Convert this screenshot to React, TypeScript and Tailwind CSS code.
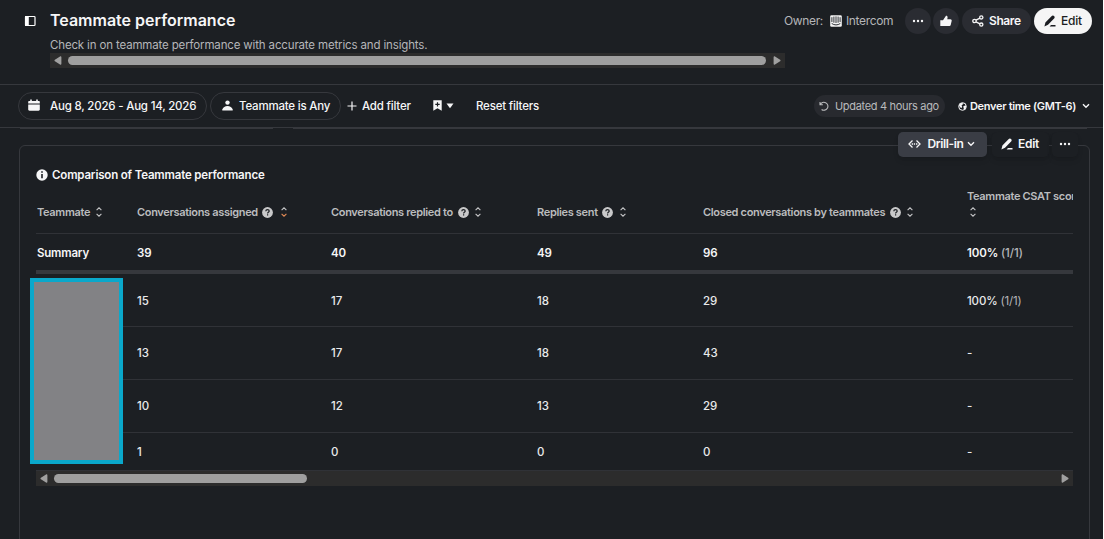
import React from "react";

type IconProps = { className?: string };

function SidebarIcon({ className }: IconProps) {
  return (
    <svg className={className} width="12" height="12" viewBox="0 0 12 12" fill="none">
      <rect x="1.500" y="1.500" width="9.500" height="9" rx="0.8" stroke="currentColor" strokeWidth="1.200" />
      <path d="M1 1h3.800v10H1z" fill="currentColor" />
    </svg>
  );
}

function CalendarIcon({ className }: IconProps) {
  return (
    <svg className={className} width="12" height="13" viewBox="0 0 12 13" fill="currentColor">
      <path d="M2.2.6h1.6V2h4.4V.6h1.6V2h1c.6 0 1 .4 1 1v1.4H.2V3c0-.6.4-1 1-1h1zM.2 5.600h11.600v5c0 .7-.5 1.200-1.200 1.200H1.400c-.7 0-1.200-.5-1.200-1.200z" />
    </svg>
  );
}

function PersonIcon({ className }: IconProps) {
  return (
    <svg className={className} width="11" height="11" viewBox="0 0 11 11" fill="currentColor">
      <circle cx="5.500" cy="2.600" r="2.200" />
      <path d="M.3 10.600V9.600C1 7.500 3.100 6.100 5.500 6.100s4.500 1.400 5.200 3.500v1z" />
    </svg>
  );
}

function PencilIcon({ className }: IconProps) {
  return (
    <svg className={className} width="12" height="12" viewBox="0 0 12 12" fill="currentColor">
      <path d="M.4 11.400l1-3.900L7.500 1.200c.8-.8 1.900-.8 2.600-.1.800.8.700 1.800 0 2.500L4 9.800z" />
      <path d="M5.600 11.400L7 9.900h4.500v1.500z" />
    </svg>
  );
}

function ShareIcon({ className }: IconProps) {
  return (
    <svg className={className} width="12" height="12" viewBox="0 0 12 12" fill="none" stroke="currentColor" strokeWidth="1.300">
      <circle cx="2.500" cy="6" r="1.700" />
      <circle cx="9.300" cy="2.400" r="1.600" />
      <circle cx="9.300" cy="9.600" r="1.600" />
      <path d="M4 5.200l3.900-2M4 6.800l3.900 2" />
    </svg>
  );
}

function ThumbIcon({ className }: IconProps) {
  return (
    <svg className={className} width="12" height="12" viewBox="0 0 12 12" fill="currentColor">
      <path d="M.3 5.200h2.700v5.900H.3zM3 5.200L6 .7c1-.1 1.700.6 1.600 1.600L7.300 4.200h3.100c.9 0 1.500.8 1.300 1.600l-1 4.100c-.2.7-.8 1.200-1.500 1.200H3z" />
    </svg>
  );
}

function DotsIcon({ className }: IconProps) {
  return (
    <svg className={className} width="12" height="4" viewBox="0 0 12 4" fill="currentColor">
      <circle cx="2" cy="2" r="1.200" />
      <circle cx="6" cy="2" r="1.200" />
      <circle cx="10" cy="2" r="1.200" />
    </svg>
  );
}

function IntercomIcon({ className }: IconProps) {
  return (
    <svg className={className} width="12" height="12" viewBox="0 0 12 12">
      <rect x="0.200" y="0.200" width="11.600" height="11.600" rx="1.300" fill="#f4f4f4" />
      <path d="M1.900 2.600v4M3.900 2v5.300M6 1.800v5.800M8.100 2v5.300M10.100 2.600v4M2 8.700c2.300 1.700 5.700 1.700 8 0" fill="none" stroke="#24272c" strokeWidth="0.950" strokeLinecap="round" />
    </svg>
  );
}

function BookmarkIcon({ className }: IconProps) {
  return (
    <svg className={className} width="9" height="11" viewBox="0 0 9 11">
      <path d="M.3.300h8.400v10.400L4.500 8.300.3 10.700z" fill="currentColor" />
      <path d="M4.500 2.200v4.400M2.300 4.400h4.400" stroke="#1c1f23" strokeWidth="1.200" />
    </svg>
  );
}

function UndoIcon({ className }: IconProps) {
  return (
    <svg className={className} width="10" height="10" viewBox="0 0 10 10" fill="none" stroke="currentColor" strokeWidth="1.100">
      <path d="M1 .9v2.900h2.900M1.200 3.700A4 4 0 1 1 2.600 8.500" />
    </svg>
  );
}

function GlobeIcon({ className }: IconProps) {
  return (
    <svg className={className} width="9" height="9" viewBox="0 0 9 9" fill="none">
      <circle cx="4.500" cy="4.500" r="3.800" stroke="currentColor" strokeWidth="1" />
      <path d="M1 3.500L3 1l2.300.3-.8 1.500-1 .8.7 1.200-.6 1.300L2 5.200zM5.300 4.300l2-.8.9.6-.6 2.500-1.700 1.300-.2-1.700z" fill="currentColor" />
    </svg>
  );
}

function ChevronDown({ className }: IconProps) {
  return (
    <svg className={className} width="8" height="6" viewBox="0 0 8 6" fill="none" stroke="currentColor" strokeWidth="1.400">
      <path d="M1 1.200l3 3 3-3" />
    </svg>
  );
}

function DrillIcon({ className }: IconProps) {
  return (
    <svg className={className} width="13" height="10" viewBox="0 0 13 10" fill="none" stroke="currentColor" strokeWidth="1.300">
      <path d="M4.500 1.500L1 5l3.500 3.500M8.500 1.500L12 5 8.500 8.500M3.700 5h1.400M8 5h1.400M5.900 5h1.200" />
    </svg>
  );
}

function InfoIcon({ className }: IconProps) {
  return (
    <svg className={className} width="12" height="12" viewBox="0 0 12 12">
      <circle cx="6" cy="6" r="5.700" fill="#f6f6f7" />
      <path d="M6 2.300v1.500M6 4.900v4.400" stroke="#1c1f23" strokeWidth="1.600" />
    </svg>
  );
}

function HelpIcon() {
  return (
    <svg className="ml-[4px]" width="11" height="11" viewBox="0 0 11 11">
      <circle cx="5.500" cy="5.500" r="5.400" fill="#c9c9ca" />
      <path d="M3.800 4.300c0-1.100.8-1.700 1.700-1.700 1 0 1.700.6 1.700 1.500 0 1.200-1.600 1.200-1.600 2.300M5.600 7.300v1.200" fill="none" stroke="#1c1f23" strokeWidth="1.200" />
    </svg>
  );
}

function SortIcon({ active, className }: { active?: boolean; className?: string }) {
  return (
    <svg className={className} width="6" height="10" viewBox="0 0 6 10" fill="none" strokeWidth="1.100">
      <path d="M.6 3.200L3 .8l2.400 2.400" stroke="#c4c4c6" />
      <path d="M.6 6.800L3 9.200l2.400-2.400" stroke={active ? "#e08a56" : "#c4c4c6"} />
    </svg>
  );
}

function Arrow({ flip }: { flip?: boolean }) {
  return (
    <svg className={flip ? "rotate-180" : ""} width="8" height="9" viewBox="0 0 8 9">
      <path d="M.9 3.800L6 .5c.8-.4 1.400-.1 1.400.7v6.600c0 .8-.6 1.100-1.400.7L.9 5.200a.8.8 0 0 1 0-1.400z" fill="#a0a0a0" />
    </svg>
  );
}

function Scrollbar({ thumb }: { thumb: string }) {
  return (
    <div className="flex h-[15px] items-center bg-[#2c2c2c] px-[4px]">
      <Arrow />
      <div className="flex-1 pl-[6px]">
        <div className={`h-[9px] rounded-full bg-[#9f9f9f] ${thumb}`} />
      </div>
      <Arrow flip />
    </div>
  );
}

const GRID = "grid grid-cols-[100px_194px_206px_166px_264px_200px] pl-px";

const COLUMNS = [
  { label: "Teammate", help: false, text: "w-[53px]", gap: "ml-[6px]" },
  { label: "Conversations assigned", help: true, active: true, text: "w-[121px]", gap: "ml-[8px]" },
  { label: "Conversations replied to", help: true, text: "w-[123px]", gap: "ml-[6px]" },
  { label: "Replies sent", help: true, text: "w-[61px]", gap: "ml-[7px]" },
  { label: "Closed conversations by teammates", help: true, text: "w-[183px]", gap: "ml-[6px]" },
];

const ROWS = [
  { cells: ["15", "17", "18", "29"], score: "100%", height: "h-[53px] pt-px" },
  { cells: ["13", "17", "18", "43"], height: "h-[53px] pb-px" },
  { cells: ["10", "12", "13", "29"], height: "h-[53px] pb-px" },
  { cells: ["1", "0", "0", "0"], height: "h-[38px] pt-px" },
];

function Header() {
  return (
    <header className="flex h-[85px] border-b border-[#36383d]">
      <SidebarIcon className="mt-[15px] ml-[24px] text-white" />
      <div className="ml-[14px] w-[735px] shrink-0">
        <h1 className="mt-[10px] text-[16px] leading-[20px] font-semibold">Teammate performance</h1>
        <p className="mt-[8px] text-[11.5px] leading-[14px] tracking-[-0.15px] text-[#b5b6b9]">
          Check in on teammate performance with accurate metrics and insights.
        </p>
        <div className="mt-px">
          <Scrollbar thumb="w-[698px]" />
        </div>
      </div>
      <div className="mt-[8px] ml-[-1px] flex h-[26px] flex-1 items-center justify-end pr-[11px] text-[12px]">
        <span className="w-[46px] shrink-0 tracking-[-0.35px] text-[#b5b6b9]">Owner:</span>
        <IntercomIcon />
        <span className="ml-[4px] w-[59px] shrink-0 tracking-[-0.35px] text-[#b5b6b9]">Intercom</span>
        <button className="flex size-[26px] shrink-0 items-center justify-center rounded-full bg-[#2a2c32]">
          <DotsIcon />
        </button>
        <button className="ml-[2px] flex size-[26px] shrink-0 items-center justify-center rounded-full bg-[#2a2c32]">
          <ThumbIcon />
        </button>
        <button className="ml-[3px] flex h-[26px] w-[69px] shrink-0 items-center rounded-full bg-[#2a2c32] pl-[10px] font-semibold">
          <ShareIcon />
          <span className="ml-[5px] tracking-[-0.4px]">Share</span>
        </button>
        <button className="ml-[3px] flex h-[26px] w-[58px] shrink-0 items-center rounded-full bg-[#f5f5f5] pl-[10px] font-medium text-[#1b1d21]">
          <PencilIcon />
          <span className="ml-[5px] tracking-[-0.2px]">Edit</span>
        </button>
      </div>
    </header>
  );
}

function FilterBar() {
  return (
    <div className="flex h-[43px] items-center border-b border-[#36383d] pl-[18px] text-[11.5px] leading-[16px] font-medium tracking-[-0.2px]">
      <button className="flex h-[28px] w-[189px] items-center rounded-full border border-[#36383d] pl-[9px]">
        <CalendarIcon className="mb-[2px]" />
        <span className="ml-[10px] whitespace-nowrap">Aug 8, 2026 - Aug 14, 2026</span>
      </button>
      <button className="ml-[3px] flex h-[28px] w-[131px] items-center rounded-full border border-[#36383d] pl-[11px]">
        <PersonIcon className="mb-[2px]" />
        <span className="ml-[6px] whitespace-nowrap">Teammate is Any</span>
      </button>
      <svg className="ml-[6px]" width="10" height="10" viewBox="0 0 10 10" stroke="currentColor" strokeWidth="1.200">
        <path d="M5 .5v9M.5 5h9" />
      </svg>
      <span className="ml-[5px] w-[71px] whitespace-nowrap">Add filter</span>
      <BookmarkIcon className="mb-px" />
      <svg className="ml-[4px]" width="8" height="6" viewBox="0 0 8 6" fill="currentColor">
        <path d="M.5.500h7L4 5.200z" />
      </svg>
      <span className="ml-[22px] whitespace-nowrap">Reset filters</span>
      <div className="ml-auto flex h-[22px] w-[131px] shrink-0 items-center rounded-full bg-[#282a2f] pl-[5px] text-[11px] font-normal text-[#b9babc]">
        <UndoIcon />
        <span className="ml-[6px] tracking-[-0.32px] whitespace-nowrap">Updated 4 hours ago</span>
      </div>
      <div className="ml-[13px] flex w-[145px] shrink-0 items-center">
        <GlobeIcon />
        <span className="ml-[3px] w-[112px] pb-px text-[11px] font-semibold tracking-[-0.32px] whitespace-nowrap">Denver time (GMT-6)</span>
        <ChevronDown />
      </div>
    </div>
  );
}

function CardActions() {
  return (
    <div className="absolute top-[-14px] right-[11px] flex h-[25px] text-[12px] leading-[17px] font-semibold">
      <button className="flex w-[89px] items-center rounded-[5px] bg-[#3a3d45] pl-[10px] shadow-md">
        <DrillIcon className="mb-px" />
        <span className="ml-[3px] w-[43px] pb-[2px] tracking-[-0.4px] whitespace-nowrap">Drill-in</span>
        <ChevronDown className="mb-px" />
      </button>
      <button className="ml-[5px] flex w-[57px] items-center rounded-[5px] bg-[#1c1f23] pl-[9px] shadow-md">
        <PencilIcon className="mb-px" />
        <span className="ml-[5px] pb-[2px] tracking-[-0.3px]">Edit</span>
      </button>
      <button className="ml-[3px] flex w-[26px] items-center justify-center rounded-[5px] bg-[#1c1f23] shadow-md">
        <DotsIcon className="mb-px" />
      </button>
    </div>
  );
}

function PerformanceTable() {
  return (
    <div className="relative mt-[8px] w-[1037px]">
      <div className="overflow-hidden">
        <div className={`${GRID} h-[44px] w-[1131px] border-b border-[#303237] text-[11px] font-semibold tracking-[-0.33px] text-[#bbbcbe]`}>
          {COLUMNS.map((column) => (
            <div key={column.label} className="box-content flex h-[14px] items-center self-start pt-[15px] leading-[14px]">
              <span className={`whitespace-nowrap ${column.text}`}>{column.label}</span>
              {column.help && <HelpIcon />}
              <SortIcon active={column.active} className={column.gap} />
            </div>
          ))}
          <div className="-mt-px leading-[14px]">
            <div className="whitespace-nowrap">Teammate CSAT score</div>
            <SortIcon className="mt-[4px] ml-[3px]" />
          </div>
        </div>
        <div className={`${GRID} h-[40px] w-[1131px] items-center border-b-4 border-[#36383d] pt-[2px] text-[11.5px] leading-[16px] font-semibold tracking-[-0.1px]`}>
          <span className="tracking-[-0.2px]">Summary</span>
          <span>39</span>
          <span>40</span>
          <span>49</span>
          <span>96</span>
          <span>
            100% <span className="font-medium text-[#b5b6b9]">(1/1)</span>
          </span>
        </div>
        {ROWS.map((row, index) => (
          <div key={index} className={`${GRID} ${row.height} w-[1131px] items-center border-b border-[#303237] text-[11.5px] leading-[16px] font-medium text-[#e9eaeb]`}>
            <span />
            {row.cells.map((value, cell) => (
              <span key={cell}>{value}</span>
            ))}
            <span className="tracking-[-0.15px]">
              {row.score ? (
                <>
                  {row.score} <span className="font-normal text-[#b5b6b9]">(1/1)</span>
                </>
              ) : (
                "-"
              )}
            </span>
          </div>
        ))}
        <Scrollbar thumb="w-[253px]" />
      </div>
      <div className="absolute top-[88px] left-[-6px] h-[186px] w-[93px] border-4 border-[#0aa8cb] bg-[#828285]" />
    </div>
  );
}

export default function App() {
  return (
    <div className="h-[539px] w-[1104px] overflow-hidden border-r border-white bg-[#1c1f23] font-['Inter',sans-serif] text-[#f6f6f7] [&_svg]:shrink-0">
      <Header />
      <FilterBar />
      <div className="flex h-[1px] gap-[20px] pr-[16px] pl-[20px]">
        <div className="w-[253px] bg-[#36383d]" />
        <div className="flex-1 bg-[#36383d]" />
      </div>
      <section className="relative mt-[16px] ml-[19px] h-[420px] w-[1071px] rounded-[6px] border border-[#36383d] pl-[16px]">
        <CardActions />
        <div className="flex items-center pt-[22px]">
          <InfoIcon />
          <h2 className="ml-[4px] text-[11.5px] leading-[14px] font-semibold tracking-[-0.17px] whitespace-nowrap">Comparison of Teammate performance</h2>
        </div>
        <PerformanceTable />
      </section>
    </div>
  );
}
